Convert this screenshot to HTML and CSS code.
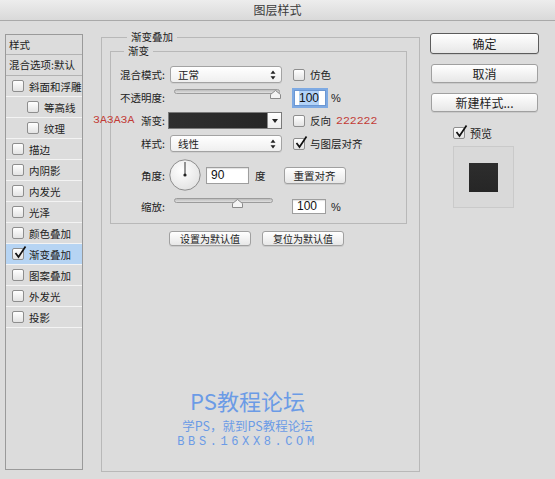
FILE: index.html
```html
<!DOCTYPE html>
<html lang="zh">
<head>
<meta charset="utf-8">
<title>图层样式</title>
<link rel="stylesheet" href="styles.css">
</head>
<body>
<div class="titlebar">图层样式</div>
<div class="content">
  <div class="sidebar">
    <div class="side-head">样式</div>
    <div class="side-head tall">混合选项:默认</div>
    <div class="item"><span class="cb"></span>斜面和浮雕</div>
    <div class="item sub"><span class="cb"></span>等高线</div>
    <div class="item sub"><span class="cb"></span>纹理</div>
    <div class="item"><span class="cb"></span>描边</div>
    <div class="item"><span class="cb"></span>内阴影</div>
    <div class="item"><span class="cb"></span>内发光</div>
    <div class="item"><span class="cb"></span>光泽</div>
    <div class="item"><span class="cb"></span>颜色叠加</div>
    <div class="item selected"><span class="cb"><svg class="check" viewBox="0 0 14 14" width="14" height="14"><path d="M2.5 7 L5.5 11 L12.5 0.5" fill="none" stroke="#111" stroke-width="1.7"/></svg></span>渐变叠加</div>
    <div class="item"><span class="cb"></span>图案叠加</div>
    <div class="item"><span class="cb"></span>外发光</div>
    <div class="item"><span class="cb"></span>投影</div>
  </div>

  <fieldset class="group outer">
    <legend>渐变叠加</legend>
    <fieldset class="group inner">
      <legend>渐变</legend>

      <div class="row">
        <span class="label">混合模式:</span>
        <div class="select sel-blend"><span>正常</span><svg class="updown" viewBox="0 0 6 10" width="6" height="10"><path d="M3 0.5 L5.5 3.8 H0.5Z M3 9.5 L5.5 6.2 H0.5Z" fill="#222"/></svg></div>
        <span class="cb cb-right"></span><span class="cb-text">仿色</span>
      </div>

      <div class="row">
        <span class="label">不透明度:</span>
        <div class="slider slider-opacity"><div class="track"></div><svg class="thumb" style="left:96px" viewBox="0 0 11 9" width="11" height="9"><path d="M5.5 0.5 L10.5 4.5 V8.5 H0.5 V4.5Z" fill="#f4f4f4" stroke="#8a8a8a"/></svg></div>
        <div class="field focus f-opacity"><span class="sel-text">100</span></div>
        <span class="pct">%</span>
      </div>

      <div class="row">
        <span class="note note-left">3A3A3A</span>
        <span class="label">渐变:</span>
        <div class="gradient"><div class="swatch"></div><div class="drop"><svg viewBox="0 0 6 4" width="6" height="4"><path d="M0 0 H6 L3 4Z" fill="#222"/></svg></div></div>
        <span class="cb cb-right"></span><span class="cb-text">反向</span>
        <span class="note note-right">222222</span>
      </div>

      <div class="row">
        <span class="label">样式:</span>
        <div class="select sel-style"><span>线性</span><svg class="updown" viewBox="0 0 6 10" width="6" height="10"><path d="M3 0.5 L5.5 3.8 H0.5Z M3 9.5 L5.5 6.2 H0.5Z" fill="#222"/></svg></div>
        <span class="cb cb-right"><svg class="check" viewBox="0 0 14 14" width="14" height="14"><path d="M2.5 7 L5.5 11 L12.5 0.5" fill="none" stroke="#111" stroke-width="1.7"/></svg></span><span class="cb-text">与图层对齐</span>
      </div>

      <div class="row row-angle">
        <span class="label">角度:</span>
        <svg class="dial" viewBox="0 0 32 32" width="32" height="32">
          <defs><radialGradient id="dg" cx="0.4" cy="0.35" r="0.7"><stop offset="0" stop-color="#ffffff"/><stop offset="1" stop-color="#e2e2e2"/></radialGradient></defs>
          <circle cx="16" cy="16" r="15.2" fill="url(#dg)" stroke="#8c8c8c" stroke-width="1"/>
          <line x1="16" y1="16" x2="16" y2="3" stroke="#333" stroke-width="1"/>
          <circle cx="16" cy="16" r="1.6" fill="#222"/>
        </svg>
        <div class="field f-angle">90</div>
        <span class="deg">度</span>
        <button class="btn btn-reset">重置对齐</button>
      </div>

      <div class="row">
        <span class="label">缩放:</span>
        <div class="slider slider-scale"><div class="track"></div><svg class="thumb" style="left:58px" viewBox="0 0 11 9" width="11" height="9"><path d="M5.5 0.5 L10.5 4.5 V8.5 H0.5 V4.5Z" fill="#f4f4f4" stroke="#8a8a8a"/></svg></div>
        <div class="field f-scale">100</div>
        <span class="pct">%</span>
      </div>
    </fieldset>

    <div class="defaults">
      <button class="btn btn-small">设置为默认值</button>
      <button class="btn btn-small">复位为默认值</button>
    </div>

    <div class="watermark">
      <div class="wm1">PS教程论坛</div>
      <div class="wm2">学PS，就到PS教程论坛</div>
      <div class="wm3">BBS.16XX8.COM</div>
    </div>
  </fieldset>

  <div class="actions">
    <button class="btn btn-main btn-ok">确定</button>
    <button class="btn btn-main">取消</button>
    <button class="btn btn-main">新建样式...</button>
    <div class="preview-check"><span class="cb"><svg class="check" viewBox="0 0 14 14" width="14" height="14"><path d="M2.5 7 L5.5 11 L12.5 0.5" fill="none" stroke="#111" stroke-width="1.7"/></svg></span><span class="cb-text">预览</span></div>
    <div class="preview"><div class="preview-swatch"></div></div>
  </div>
</div>
</body>
</html>
```

FILE: styles.css
```css
* { box-sizing: border-box; }
html, body { margin: 0; padding: 0; }
body {
  width: 555px;
  height: 479px;
  overflow: hidden;
  background: #dcdcdc;
  font-family: "Noto Sans CJK SC", "Noto Sans", sans-serif;
  font-size: 10.5px;
  color: #222;
}

.titlebar {
  height: 21px;
  line-height: 20px;
  text-align: center;
  font-size: 12px;
  color: #3a3a3a;
  background: linear-gradient(#ededed, #d9d9d9);
  border-bottom: 1px solid #a9a9a9;
}

.content {
  display: flex;
  align-items: flex-start;
  padding: 9px 0 0 5px;
}

/* ---------- sidebar ---------- */
.sidebar {
  width: 78px;
  height: 436px;
  margin-top: 4px;
  border: 1px solid #9a9a9a;
  background: #dcdcdc;
  flex: none;
}
.side-head {
  height: 20px;
  line-height: 19px;
  padding-left: 3px;
  border-bottom: 1px solid #b2b2b2;
}
.side-head.tall { height: 21px; line-height: 20px; }
.item {
  height: 21px;
  display: flex;
  align-items: center;
  gap: 5px;
  padding-left: 6px;
  border-bottom: 1px solid #f3f3f3;
}
.item.sub { padding-left: 21px; }
.item.selected { background: #b6d4f3; }

.cb {
  position: relative;
  flex: none;
  width: 12px;
  height: 12px;
  border: 1px solid #8e8e8e;
  border-radius: 2px;
  background: linear-gradient(#ffffff, #e3e3e3);
}
.check {
  position: absolute;
  left: 0;
  top: -3px;
  overflow: visible;
}

/* ---------- group boxes ---------- */
.group {
  margin: 0;
  border: 1px solid #b8b8b8;
  min-width: 0;
}
.group > legend {
  padding: 0 4px;
  line-height: 14px;
  font-size: 10.5px;
}
.outer {
  flex: none;
  width: 319px;
  height: 442px;
  margin-left: 18px;
  padding: 0 12px 0 8px;
}
.outer > legend { margin-left: 17px; }
.inner {
  height: 180px;
  padding: 5px 0 0 0;
}
.inner > legend { margin-left: 13px; }

/* ---------- rows ---------- */
.row {
  position: relative;
  display: flex;
  align-items: center;
  height: 23px;
}
.row-angle { height: 40px; }
.label {
  flex: none;
  width: 55px;
  text-align: right;
  padding-right: 1px;
}
.cb-right { margin-left: 11px; }
.cb-text { margin-left: 5px; white-space: nowrap; }

.select {
  flex: none;
  width: 112px;
  height: 17px;
  margin-left: 4px;
  padding: 0 5px 0 7px;
  display: flex;
  align-items: center;
  justify-content: space-between;
  border: 1px solid #a3a3a3;
  border-radius: 3px;
  background: linear-gradient(#ffffff, #efefef);
  box-shadow: 0 1px 0 rgba(0,0,0,0.06);
}

.slider {
  position: relative;
  flex: none;
  height: 16px;
  margin-left: 8px;
  margin-top: -5px;
}
.slider-opacity { width: 106px; }
.slider-scale { width: 99px; }
.track {
  margin-top: 2px;
  height: 5px;
  border-radius: 3px;
  border: 1px solid #9b9b9b;
  background: linear-gradient(#bdbdbd, #e0e0e0);
}
.thumb {
  position: absolute;
  top: 3px;
}

.field {
  flex: none;
  height: 16px;
  border: 1px solid #9e9e9e;
  background: #fff;
  font-family: "Liberation Sans", Arial, sans-serif;
  font-size: 12px;
  line-height: 14px;
  padding-left: 4px;
  color: #111;
  box-shadow: inset 0 1px 1px rgba(0,0,0,0.12);
}
.f-opacity { width: 32px; margin-left: 14px; }
.focus { box-shadow: 0 0 0 2px #7eaae3; border-color: #6c97d2; }
.sel-text { background: #b3d3f8; }
.f-angle { width: 43px; height: 17px; margin-left: 5px; line-height: 15px; }
.f-scale { width: 34px; height: 15px; margin-left: 19px; line-height: 13px; }
.pct { margin-left: 5px; font-family: "Liberation Sans", Arial, sans-serif; font-size: 11px; }
.deg { margin-left: 6px; }

.gradient {
  flex: none;
  display: flex;
  width: 114px;
  height: 17px;
  margin-left: 2px;
  border: 1px solid #7a7a7a;
}
.swatch {
  flex: 1;
  background: linear-gradient(to right, #2f2f2f, #262626);
}
.drop {
  width: 14px;
  display: flex;
  align-items: center;
  justify-content: center;
  border-left: 1px solid #8a8a8a;
  background: linear-gradient(#ffffff, #ececec);
}

.note {
  font-family: "Liberation Mono", monospace;
  font-size: 11.5px;
  color: #c23b36;
}
.note-left {
  position: absolute;
  left: -18px;
  top: 4px;
}
.note-right { margin-left: 5px; }

.dial { flex: none; margin-left: 3px; }

/* ---------- buttons ---------- */
.btn {
  appearance: none;
  -webkit-appearance: none;
  margin: 0;
  padding: 0;
  font-family: "Noto Sans CJK SC", "Noto Sans", sans-serif;
  color: #222;
  background: linear-gradient(#ffffff, #e7e7e7);
  border: 1px solid #a0a0a0;
  border-radius: 3px;
  display: flex;
  align-items: center;
  justify-content: center;
  box-shadow: 0 1px 0 rgba(0,0,0,0.08);
}
.btn-reset {
  width: 62px;
  height: 17px;
  margin-left: 18px;
  font-size: 10.5px;
}
.defaults {
  display: flex;
  gap: 11px;
  margin-top: 7px;
  padding-left: 59px;
}
.btn-small {
  width: 82px;
  height: 15px;
  font-size: 10px;
}

/* ---------- watermark ---------- */
.watermark {
  width: 275px;
  margin-top: 142px;
  display: flex;
  flex-direction: column;
  align-items: center;
  color: #6b9be6;
}
.wm1 { font-size: 22px; line-height: 24px; }
.wm2 { font-size: 12.5px; line-height: 17px; margin-top: 5px; }
.wm3 {
  margin-top: 1px;
  font-family: "Liberation Mono", monospace;
  font-size: 12px;
  line-height: 14px;
  letter-spacing: 3.6px;
}

/* ---------- actions ---------- */
.actions {
  flex: none;
  width: 109px;
  margin-left: 10px;
  margin-top: 3px;
  display: flex;
  flex-direction: column;
  align-items: center;
}
.btn-main {
  width: 107px;
  height: 19px;
  font-size: 12px;
  margin-top: 10px;
}
.btn-ok {
  width: 109px;
  height: 21px;
  margin-top: 0;
  border-color: #5c5c5c;
}
.preview-check {
  display: flex;
  align-items: center;
  align-self: flex-start;
  margin-left: 23px;
  margin-top: 13px;
  font-size: 11px;
}
.preview {
  align-self: flex-start;
  margin-left: 23px;
  margin-top: 5px;
  width: 61px;
  height: 62px;
  border: 1px solid #cacaca;
  background: #d9d9d9;
  display: flex;
  align-items: center;
  justify-content: center;
}
.preview-swatch {
  width: 29px;
  height: 29px;
  background: linear-gradient(#2d2d2d, #262626);
}
```
